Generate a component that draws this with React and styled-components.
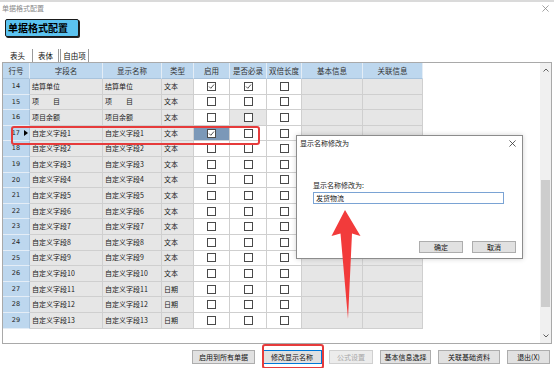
import React from 'react';
import styled, { createGlobalStyle } from 'styled-components';

const Global = createGlobalStyle`
  html, body { margin: 0; padding: 0; background: #fff; }
  body { font-family: "Noto Sans CJK SC", "Liberation Sans", sans-serif; }
  #root { width: 554px; height: 368px; overflow: hidden; }
`;

const Window = styled.div`
  position: relative;
  width: 554px;
  height: 368px;
  box-sizing: border-box;
  border-top: 2px solid #dadada;
  background: #fff;
  display: flex;
  flex-direction: column;
  overflow: hidden;
`;

const TitleBar = styled.div`
  height: 12px;
  display: flex;
  align-items: center;
  justify-content: space-between;
  padding: 0 5px 0 2px;
  font-size: 7px;
  line-height: 1;
  color: #8a8a8a;
`;

const BigButton = styled.div`
  margin: 5px 0 0 5px;
  width: 74px;
  height: 18px;
  box-sizing: border-box;
  background: #5bc3f0;
  border: 1px solid #1a1a1a;
  border-radius: 2px;
  box-shadow: 1px 1px 0 #222;
  display: flex;
  align-items: center;
  padding-left: 2px;
  font-size: 10px;
  font-weight: bold;
  color: #000;
  line-height: 1;
`;

const TabStrip = styled.div`
  margin-top: 12px;
  height: 13px;
  display: flex;
  padding-left: 3px;
`;

const Tab = styled.div`
  width: ${p => p.$w}px;
  box-sizing: border-box;
  border-right: 1px solid #9a9a9a;
  border-left: ${p => (p.$bl ? '1px solid #9a9a9a' : 'none')};
  margin-left: ${p => (p.$ml ? p.$ml : 0)}px;
  display: flex;
  align-items: center;
  justify-content: center;
  font-size: 7.5px;
  line-height: 1;
  color: #111;
  background: #fff;
`;

const Panel = styled.div`
  margin-left: 2px;
  width: 550px;
  height: 282px;
  box-sizing: border-box;
  border: 1px solid #a9a9a9;
  display: flex;
`;

const TableArea = styled.div`
  flex: 1;
  background: #fff;
  overflow: hidden;
`;

const Table = styled.div`
  display: grid;
  grid-template-columns: 27px 73px 59px 32px 36px 37px 35px 61px 60px;
  grid-template-rows: 16px repeat(16, 15.6px);
  width: 420px;
`;

const HeadCell = styled.div`
  box-sizing: border-box;
  background: #bdd7ee;
  border-right: 1px solid #e4edf6;
  border-bottom: 1px solid #a8c3dc;
  display: flex;
  align-items: center;
  justify-content: center;
  font-size: 7.5px;
  line-height: 1;
  color: #333;
  white-space: nowrap;
  overflow: hidden;
`;

const NumCell = styled.div`
  box-sizing: border-box;
  background: #bdd7ee;
  border-right: 1px solid #a8c3dc;
  border-bottom: 1px solid #e4edf6;
  display: flex;
  align-items: center;
  justify-content: ${p => (p.$current ? 'flex-end' : 'center')};
  gap: 4px;
  padding-right: ${p => (p.$current ? 1 : 0)}px;
  font-family: "DejaVu Sans", "Liberation Sans", sans-serif;
  font-size: 6.5px;
  line-height: 1;
  color: #222;
  white-space: nowrap;
`;

const Marker = styled.span`
  width: 0;
  height: 0;
  border-top: 3.5px solid transparent;
  border-bottom: 3.5px solid transparent;
  border-left: 4px solid #000;
`;

const Cell = styled.div`
  box-sizing: border-box;
  background: ${p => p.$bg || '#e6e6e6'};
  border-right: 1px solid #cfcfcf;
  border-bottom: 1px solid #cfcfcf;
  display: flex;
  align-items: center;
  justify-content: ${p => (p.$center ? 'center' : 'flex-start')};
  padding-left: ${p => (p.$center ? 0 : 2)}px;
  font-size: 7px;
  line-height: 1;
  color: #1a1a1a;
  white-space: nowrap;
  overflow: hidden;
`;

const Box = styled.div`
  width: 9px;
  height: 9px;
  box-sizing: border-box;
  border: 1px solid #4a4a4a;
  background: #fff;
  display: flex;
  align-items: center;
  justify-content: center;
`;

const ScrollBar = styled.div`
  width: 11px;
  background: #f0f0f0;
  display: flex;
  flex-direction: column;
  align-items: center;
`;

const ScrollArrow = styled.div`
  height: 14px;
  width: 100%;
  display: flex;
  align-items: center;
  justify-content: center;
`;

const ScrollGap = styled.div`
  height: ${p => p.$h}px;
  flex: ${p => (p.$grow ? 1 : 'none')};
`;

const Thumb = styled.div`
  width: 9px;
  height: 127px;
  background: #cdcdcd;
`;

const ButtonBar = styled.div`
  margin-top: 6px;
  display: flex;
  justify-content: flex-end;
  gap: 7px;
  padding-right: 4px;
`;

const Button = styled.div`
  width: ${p => p.$w}px;
  height: 14px;
  box-sizing: border-box;
  background: ${p => (p.$disabled ? '#ececec' : '#e1e1e1')};
  border: 1px solid ${p => (p.$focus ? '#0078d7' : p.$disabled ? '#d0d0d0' : '#adadad')};
  display: flex;
  align-items: center;
  justify-content: center;
  font-size: 7px;
  line-height: 1;
  color: ${p => (p.$disabled ? '#a8a8a8' : '#111')};
  white-space: nowrap;
`;

const Dialog = styled.div`
  position: absolute;
  left: 296px;
  top: 133px;
  width: 227px;
  height: 124px;
  box-sizing: border-box;
  background: #fff;
  border: 1px solid #8c8c8c;
  box-shadow: 0 0 5px rgba(0, 0, 0, 0.18);
  display: flex;
  flex-direction: column;
`;

const DialogTitle = styled.div`
  height: 15px;
  display: flex;
  align-items: center;
  justify-content: space-between;
  padding: 0 6px 0 3px;
  font-size: 7px;
  line-height: 1;
  color: #222;
`;

const DialogBody = styled.div`
  flex: 1;
  display: flex;
  flex-direction: column;
  padding: 0 0 5px 16px;
`;

const Label = styled.div`
  margin-top: 29px;
  height: 10px;
  display: flex;
  align-items: center;
  font-size: 7px;
  line-height: 1;
  color: #222;
`;

const Input = styled.div`
  margin-top: 2px;
  width: 191px;
  height: 12px;
  box-sizing: border-box;
  border: 1px solid #7aa3d4;
  display: flex;
  align-items: center;
  padding-left: 2px;
  font-size: 7px;
  line-height: 1;
  color: #111;
`;

const DialogButtons = styled.div`
  margin-top: auto;
  display: flex;
  justify-content: flex-end;
  gap: 9px;
  padding-right: 6px;
`;

const DialogButton = styled.div`
  width: 44px;
  height: 12px;
  box-sizing: border-box;
  background: #e1e1e1;
  border: 1px solid #adadad;
  display: flex;
  align-items: center;
  justify-content: center;
  font-size: 7px;
  line-height: 1;
  color: #111;
`;

const Highlight = styled.div`
  position: absolute;
  left: ${p => p.$x}px;
  top: ${p => p.$y}px;
  width: ${p => p.$w}px;
  height: ${p => p.$h}px;
  box-sizing: border-box;
  border: 2px solid #e63b3b;
  border-radius: 3px;
  pointer-events: none;
`;

const Arrow = styled.svg`
  position: absolute;
  left: 326px;
  top: 204px;
`;

const CloseX = ({ size = 7, color = '#777' }) => (
  <svg width={size} height={size} viewBox="0 0 8 8">
    <path d="M0.5 0.5 L7.5 7.5 M7.5 0.5 L0.5 7.5" stroke={color} strokeWidth="0.9" fill="none" />
  </svg>
);

const Check = () => (
  <svg width="7" height="7" viewBox="0 0 7 7">
    <path d="M1 3.5 L2.8 5.3 L6 1.5" stroke="#555" strokeWidth="1" fill="none" />
  </svg>
);

const Chevron = ({ up }) => (
  <svg width="6" height="4" viewBox="0 0 6 4">
    <path d={up ? 'M0.5 3.5 L3 1 L5.5 3.5' : 'M0.5 0.5 L3 3 L5.5 0.5'} stroke="#606060" strokeWidth="1" fill="none" />
  </svg>
);

const headers = ['行号', '字段名', '显示名称', '类型', '启用', '是否必录', '双倍长度', '基本信息', '关联信息'];

const rows = [
  { n: 14, f: '结算单位', t: '文本', c: [1, 1, 0] },
  { n: 15, f: '项\u3000\u3000目', t: '文本', c: [0, 0, 0] },
  { n: 16, f: '项目余额', t: '文本', c: [0, 0, 0], grayReq: true },
  { n: 17, f: '自定义字段1', t: '文本', c: [1, 0, 0], current: true },
  { n: 18, f: '自定义字段2', t: '文本', c: [0, 0, 0] },
  { n: 19, f: '自定义字段3', t: '文本', c: [0, 0, 0] },
  { n: 20, f: '自定义字段4', t: '文本', c: [0, 0, 0] },
  { n: 21, f: '自定义字段5', t: '文本', c: [0, 0, 0] },
  { n: 22, f: '自定义字段6', t: '文本', c: [0, 0, 0] },
  { n: 23, f: '自定义字段7', t: '文本', c: [0, 0, 0] },
  { n: 24, f: '自定义字段8', t: '文本', c: [0, 0, 0] },
  { n: 25, f: '自定义字段9', t: '文本', c: [0, 0, 0] },
  { n: 26, f: '自定义字段10', t: '文本', c: [0, 0, 0] },
  { n: 27, f: '自定义字段11', t: '日期', c: [0, 0, 0] },
  { n: 28, f: '自定义字段12', t: '日期', c: [0, 0, 0] },
  { n: 29, f: '自定义字段13', t: '日期', c: [0, 0, 0] },
];

export default function App() {
  return (
    <>
      <Global />
      <Window>
        <TitleBar>
          <span>单据格式配置</span>
          <CloseX size={7} color="#8a8a8a" />
        </TitleBar>
        <BigButton>单据格式配置</BigButton>
        <TabStrip>
          <Tab $w={30}>表头</Tab>
          <Tab $w={26}>表体</Tab>
          <Tab $w={29} $bl $ml={1}>自由项</Tab>
        </TabStrip>
        <Panel>
          <TableArea>
            <Table>
              {headers.map(h => (
                <HeadCell key={h}>{h}</HeadCell>
              ))}
              {rows.map(r => (
                <React.Fragment key={r.n}>
                  <NumCell $current={r.current}>
                    <span>{r.n}</span>
                    {r.current && <Marker />}
                  </NumCell>
                  <Cell>{r.f}</Cell>
                  <Cell>{r.f}</Cell>
                  <Cell>{r.t}</Cell>
                  {r.c.map((v, i) => (
                    <Cell
                      key={i}
                      $center
                      $bg={
                        r.current && i === 0
                          ? '#7b98b8'
                          : r.grayReq && i === 1
                          ? '#e6e6e6'
                          : '#fff'
                      }
                    >
                      <Box>{v ? <Check /> : null}</Box>
                    </Cell>
                  ))}
                  <Cell />
                  <Cell />
                </React.Fragment>
              ))}
            </Table>
          </TableArea>
          <ScrollBar>
            <ScrollArrow>
              <Chevron up />
            </ScrollArrow>
            <ScrollGap $h={103} />
            <Thumb />
            <ScrollGap $grow />
            <ScrollArrow>
              <Chevron />
            </ScrollArrow>
          </ScrollBar>
        </Panel>
        <ButtonBar>
          <Button $w={63}>启用到所有单据</Button>
          <Button $w={60} $focus>修改显示名称</Button>
          <Button $w={44} $disabled>公式设置</Button>
          <Button $w={51}>基本信息选择</Button>
          <Button $w={62}>关联基础资料</Button>
          <Button $w={43}>退出(X)</Button>
        </ButtonBar>

        <Highlight $x={11} $y={124} $w={249} $h={19} />
        <Highlight $x={262} $y={342} $w={62} $h={25} />

        <Dialog>
          <DialogTitle>
            <span>显示名称修改为</span>
            <CloseX size={7} color="#333" />
          </DialogTitle>
          <DialogBody>
            <Label>显示名称修改为:</Label>
            <Input>发货物流</Input>
            <DialogButtons>
              <DialogButton>确定</DialogButton>
              <DialogButton>取消</DialogButton>
            </DialogButtons>
          </DialogBody>
        </Dialog>

        <Arrow width="40" height="120" viewBox="0 0 40 120">
          <path
            d="M19 4 L5.5 30 Q10 28.5 14.5 27.5 L22 113 L26 27.5 Q30 28.5 34.5 30 Z"
            fill="#f23b3b"
          />
        </Arrow>
      </Window>
    </>
  );
}
